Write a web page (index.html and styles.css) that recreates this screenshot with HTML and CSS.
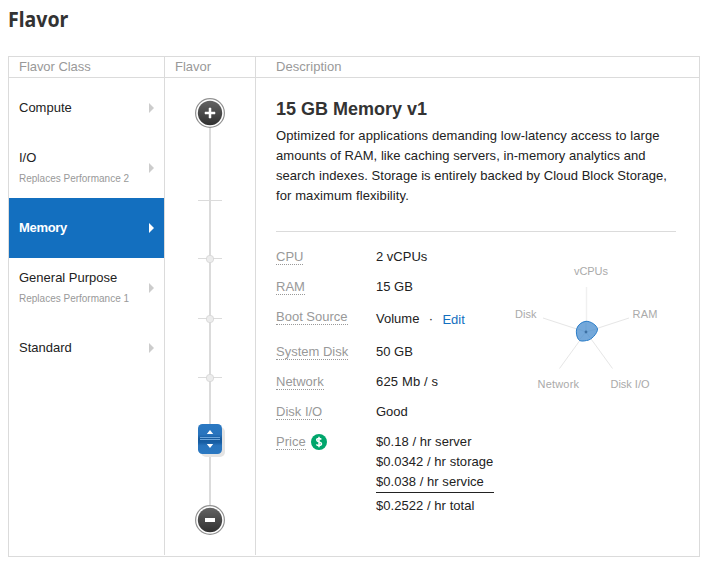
FILE: index.html
```html
<!DOCTYPE html>
<html lang="en">
<head>
<meta charset="utf-8">
<title>Flavor</title>
<link rel="stylesheet" href="styles.css">
</head>
<body>
<h1><span>Flavor</span></h1>
<div class="table">
  <div class="head">
    <div class="cell-class">Flavor Class</div>
    <div class="cell-flavor">Flavor</div>
    <div class="cell-desc">Description</div>
  </div>
  <div class="body">
    <ul class="classes">
      <li><div><b>Compute</b></div><i class="arrow"></i></li>
      <li><div><b class="io">I/O</b><small>Replaces Performance 2</small></div><i class="arrow"></i></li>
      <li class="active"><div><b class="memory">Memory</b></div><i class="arrow"></i></li>
      <li><div><b class="general">General Purpose</b><small>Replaces Performance 1</small></div><i class="arrow"></i></li>
      <li><div><b>Standard</b></div><i class="arrow"></i></li>
    </ul>
    <div class="slider">
      <svg width="90" height="476" viewBox="165 78 90 476">
        <defs>
          <linearGradient id="dark" x1="0" y1="0" x2="0" y2="1"><stop offset="0" stop-color="#636363"/><stop offset="1" stop-color="#303030"/></linearGradient>
          <linearGradient id="knob" x1="0" y1="0" x2="0" y2="1"><stop offset="0" stop-color="#2a78c2"/><stop offset=".35" stop-color="#2974bd"/><stop offset=".5" stop-color="#15599c"/><stop offset=".62" stop-color="#185fa5"/><stop offset=".72" stop-color="#2974bd"/><stop offset="1" stop-color="#2a78c2"/></linearGradient>
        </defs>
        <path fill="#dbdbdb" d="M209 127h2v379h-2zM198 200h24v1h-24zM198 258h24v1h-24zM198 318h24v1h-24zM198 377h24v1h-24z"/>
        <g fill="#ececec" stroke="#d4d4d4" stroke-width=".8"><circle cx="210" cy="259" r="3.7"/><circle cx="210" cy="319" r="3.7"/><circle cx="210" cy="378" r="3.7"/></g>
        <g fill="#fff" stroke="#929292" stroke-width="1.200"><circle cx="210" cy="113" r="14.4"/><circle cx="210" cy="520" r="14.4"/></g>
        <g fill="url(#dark)"><circle cx="210" cy="113" r="12.2"/><circle cx="210" cy="520" r="12.2"/></g>
        <path fill="#fff" d="M209 108h2v4h4v2h-4v4h-2v-4h-4v-2h4z" stroke="#fff" stroke-width=".5"/>
        <path fill="#fff" d="M205 518h10v4h-10z"/>
        <rect x="201" y="427" width="24" height="30" rx="5" fill="#e4e4e4"/>
        <rect x="198" y="424" width="24" height="30" rx="4.500" fill="url(#knob)"/>
        <path fill="#6ba5dc" d="M200 437h20v1h-20zM200 439h20v1h-20z"/>
        <path fill="#fff" d="M210 430l3.200 4h-6.400zM210 448l3.200-4h-6.400z"/>
      </svg>
    </div>
    <div class="details">
      <h2>15 GB Memory v1</h2>
      <p><span class="line-a">Optimized for applications demanding low-latency access to large</span><br><span class="line-b">amounts of RAM, like caching servers, in-memory analytics and</span><br><span class="line-b">search indexes. Storage is entirely backed by Cloud Block Storage,</span><br><span class="line-a">for maximum flexibility.</span></p>
      <div class="specs">
        <dl>
          <dt><span>CPU</span></dt><dd>2 vCPUs</dd>
          <dt><span>RAM</span></dt><dd>15 GB</dd>
          <dt class="boot"><span>Boot Source</span></dt><dd class="boot source">Volume<em>·</em><a>Edit</a></dd>
          <dt><span>System Disk</span></dt><dd>50 GB</dd>
          <dt><span>Network</span></dt><dd class="rate">625 Mb / s</dd>
          <dt><span>Disk I/O</span></dt><dd>Good</dd>
          <dt class="price"><span>Price</span><svg width="16" height="16" viewBox="0 0 16 16"><circle cx="8" cy="8" r="8" fill="#00a66c"/><path d="M10.300 5.500C9.800 4.800 9 4.500 8 4.500c-1.400 0-2.300.6-2.300 1.600C5.700 8.600 10.500 7.300 10.500 9.800c0 1.100-1 1.700-2.500 1.700-1.200 0-2.100-.4-2.600-1.200M8 2.800v10.400" fill="none" stroke="#fff" stroke-width="1.500"/></svg></dt>
          <dd class="costs"><div>$0.18 / hr server</div><div>$0.0342 / hr storage</div><div>$0.038 / hr service</div><div class="total">$0.2522 / hr total</div></dd>
        </dl>
        <svg class="radar" width="170" height="140" viewBox="506 256 170 140">
          <path d="M586.500 287v45" stroke="#f0f0f0" stroke-width="1.500"/>
          <path d="M586 332l43-14M586 332l-43-14M586 332l-26.500 36.500M586 332l26.500 36.500" fill="none" stroke="#e6e6e6"/>
          <path d="M586 321.300C591 321.200 596.700 325.200 597.500 329C597.800 333 591 340.600 586.500 340.500C584 341.200 579.500 341.600 578.500 339.500C576.500 337 575.800 331.500 576.800 328.500C578 325 581.500 321.800 586 321.300z" fill="#74a8da" stroke="#2b7dc8"/>
          <path d="M586 332v-9M586 332l10-3M586 332l-8-3M586 332l-6 7M586 332l5 7" stroke="#699dcf" stroke-width=".6"/>
          <circle cx="586" cy="332" r="1.400" fill="#3d70a3"/>
          <g><text x="574" y="275" textLength="34">vCPUs</text><text x="632.500" y="318" textLength="25">RAM</text><text x="515" y="318" textLength="21.500">Disk</text><text x="537.500" y="388" textLength="41.500">Network</text><text x="610.500" y="388" textLength="39">Disk I/O</text></g>
        </svg>
      </div>
    </div>
  </div>
</div>
</body>
</html>
```

FILE: styles.css
```css
* { box-sizing: border-box; margin: 0; padding: 0; }
body { background: #fff; color: #222; font: 13px/20px "Liberation Sans", Arial, sans-serif; padding: 0 9px 0 8px; }
h1 { height: 56px; padding-top: 4px; font: 700 21px/30px "Noto Sans", sans-serif; color: #333; }
h1 span { display: inline-block; transform: scaleX(.93); transform-origin: left; }
.table { width: 692px; height: 501px; border: 1px solid #dbdbdb; }
.head { display: flex; height: 21px; line-height: 20px; border-bottom: 1px solid #dbdbdb; color: #999; }
.cell-class { width: 156px; padding-left: 10px; border-right: 1px solid #dbdbdb; letter-spacing: -.05px; }
.cell-flavor { width: 91px; padding-left: 10px; border-right: 1px solid #dbdbdb; }
.cell-desc { padding-left: 20px; letter-spacing: .05px; }
.body { display: flex; height: 477px; }
.classes { width: 156px; border-right: 1px solid #dbdbdb; list-style: none; }
.classes li { display: flex; align-items: center; justify-content: space-between; height: 60px; padding: 0 10px; }
.classes b { display: block; font-weight: 400; }
.classes small { display: block; font-size: 10px; line-height: 22px; color: #999; }
.classes li:nth-child(2) div, .classes li:nth-child(4) div { padding-top: 2px; }
.classes .active { background: #136fbf; color: #fff; }
.classes .memory { font-weight: 700; letter-spacing: -.3px; }
.arrow { border-left: 5px solid #ccc; border-top: 5px solid transparent; border-bottom: 5px solid transparent; }
.active .arrow { border-left-color: #fff; }
.slider { width: 91px; border-right: 1px solid #dbdbdb; }
.slider svg { display: block; }
.details { width: 420px; margin-left: 20px; padding-top: 20px; }
h2 { font-size: 18px; line-height: 22px; color: #333; }
.details p { padding-top: 6px; height: 112px; width: 400px; border-bottom: 1px solid #dbdbdb; white-space: nowrap; }
.line-a { letter-spacing: .1px; }
.line-b { letter-spacing: .055px; }
.specs { display: flex; padding-top: 15px; }
dl { display: grid; grid-template-columns: 100px 130px; grid-template-rows: 30px 30px 35px 30px 30px 30px auto; align-items: start; white-space: nowrap; }
dt { color: #999; padding-top: 1px; line-height: 18px; }
dt span { display: inline-block; height: 17px; border-bottom: 1px dotted #999; }
.source { display: flex; padding-top: 2px; }
.source em { width: 23px; text-align: center; font-style: normal; }
.source a { color: #136fbf; padding-top: 1px; }
.rate { letter-spacing: .15px; }
.price { display: flex; gap: 5px; }
.price svg { margin-top: 1px; }
.costs { width: 118px; letter-spacing: .05px; }
.total { margin-top: 0; border-top: 1px solid #222; padding-top: 3px; }
.radar { margin-top: 9px; flex: none; }
.radar text { font-size: 11px; fill: #aaa; }
```
